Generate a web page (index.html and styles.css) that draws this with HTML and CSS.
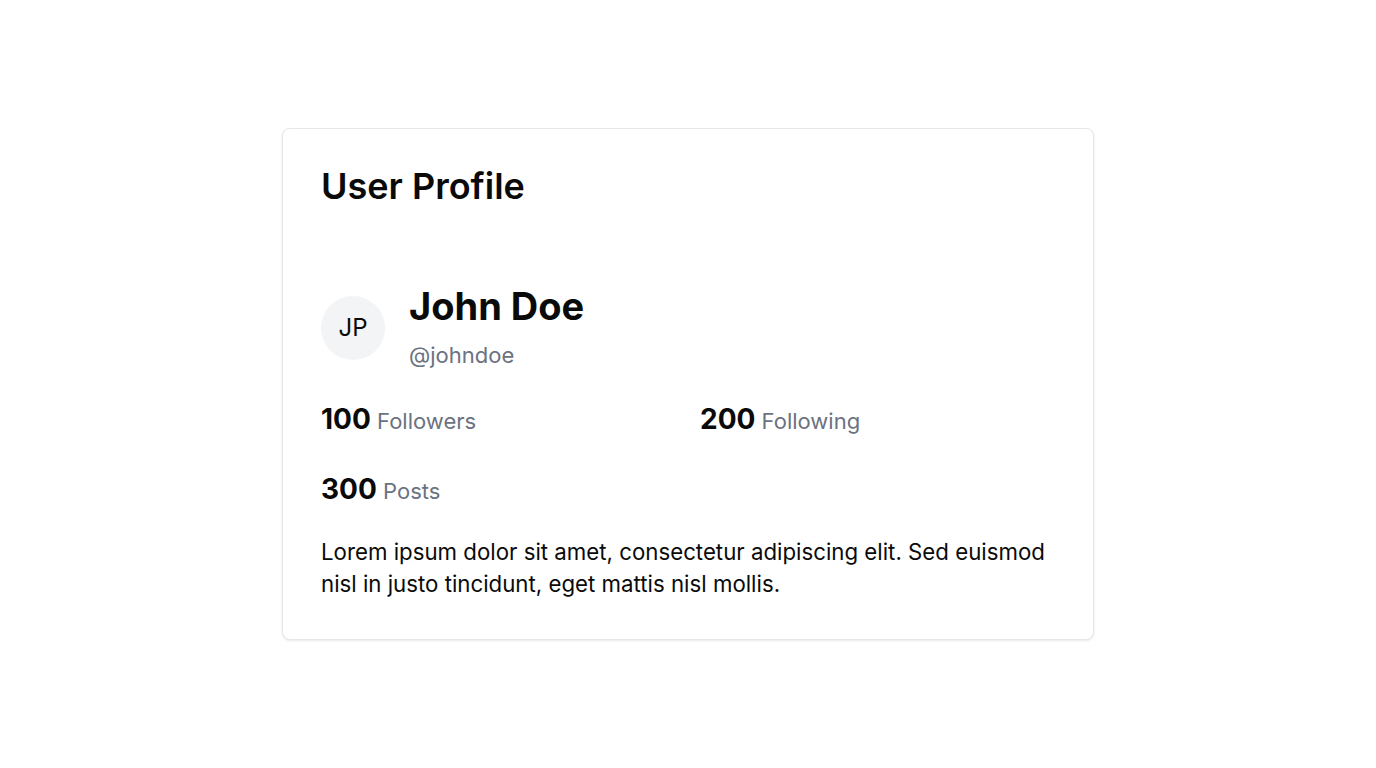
FILE: index.html
```html
<!DOCTYPE html>
<html lang="en">
<head>
<meta charset="utf-8">
<title>User Profile</title>
<link rel="stylesheet" href="styles.css">
</head>
<body>
<main class="page">
  <section class="card">
    <h1 class="card-title">User Profile</h1>
    <div class="profile">
      <div class="avatar">JP</div>
      <div class="identity">
        <h2 class="name">John Doe</h2>
        <p class="handle">@johndoe</p>
      </div>
    </div>
    <div class="stats">
      <div class="stat"><span class="stat-num">100</span> <span class="stat-label">Followers</span></div>
      <div class="stat"><span class="stat-num">200</span> <span class="stat-label">Following</span></div>
      <div class="stat"><span class="stat-num">300</span> <span class="stat-label">Posts</span></div>
    </div>
    <p class="bio">Lorem ipsum dolor sit amet, consectetur adipiscing elit. Sed euismod nisl in justo tincidunt, eget mattis nisl mollis.</p>
  </section>
</main>
</body>
</html>
```
FILE: styles.css
```css
* { box-sizing: border-box; }
html, body { margin: 0; padding: 0; }
body {
  font-family: Inter, "Noto Sans", "Liberation Sans", sans-serif;
  color: #0a0a0a;
  background: #ffffff;
}
.page {
  min-height: 100vh;
  display: flex;
  align-items: center;
  justify-content: center;
}
.card {
  width: 812px;
  border: 1px solid #e5e7eb;
  border-radius: 8px;
  background: #fff;
  box-shadow: 0 1px 3px rgba(0,0,0,0.06), 0 1px 2px rgba(0,0,0,0.04);
  padding: 37px 38px 39px;
}
.card-title {
  margin: 0;
  font-size: 36px;
  line-height: 40px;
  font-weight: 600;
}
.profile {
  margin-top: 76px;
  display: flex;
  align-items: center;
  gap: 24px;
}
.avatar {
  width: 64px;
  height: 64px;
  margin-top: 4px;
  border-radius: 50%;
  background: #f3f4f6;
  display: flex;
  align-items: center;
  justify-content: center;
  font-size: 24px;
  flex-shrink: 0;
}
.identity {
  display: flex;
  flex-direction: column;
  gap: 15px;
  padding-top: 4px;
}
.name {
  margin: 0;
  font-size: 38px;
  line-height: 40px;
  font-weight: 700;
}
.handle {
  margin: 0;
  font-size: 22px;
  line-height: 28px;
  color: #6b7280;
}
.stats {
  margin-top: 34px;
  display: grid;
  grid-template-columns: 1fr 1fr;
  column-gap: 24px;
  row-gap: 36px;
}
.stat { font-size: 22px; line-height: 32px; }
.stat-num { font-size: 28px; font-weight: 700; }
.stat-label { color: #6b7280; }
.bio {
  margin: 29px 0 0;
  font-size: 22.25px;
  line-height: 32px;
}
```
